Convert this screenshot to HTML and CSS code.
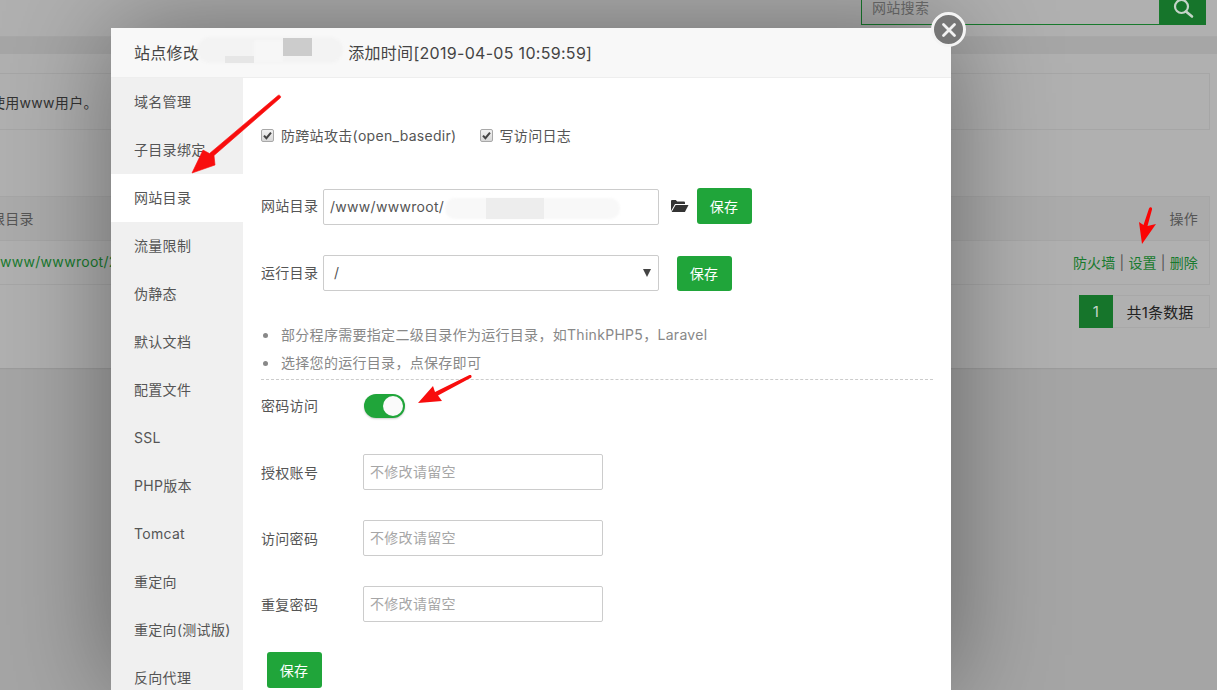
FILE: index.html
```html
<!DOCTYPE html>
<html lang="zh">
<head>
<meta charset="utf-8">
<title>站点修改</title>
<link rel="stylesheet" href="styles.css">
</head>
<body>
<div class="page">
  <header class="topbar">
    <div class="search">
      <div class="search-input">网站搜索</div>
      <div class="search-btn">
        <svg width="22" height="22" viewBox="0 0 22 22"><circle cx="9.500" cy="6.500" r="6.500" fill="none" stroke="#c4d4c8" stroke-width="2.200"/><path d="M14 11.500l6 5" stroke="#c4d4c8" stroke-width="2.600" stroke-linecap="round"/></svg>
      </div>
    </div>
  </header>
  <div class="strip"></div>
  <main class="panel">
    <div class="notice">使用www用户。</div>
    <div class="table">
      <div class="thead"><span>根目录</span><span>操作</span></div>
      <div class="trow">
        <a class="path">www/wwwroot/2</a>
        <span class="ops"><a>防火墙</a> | <a>设置</a> | <a>删除</a></span>
      </div>
    </div>
    <div class="pager"><span class="pg-cur">1</span><span class="pg-total">共1条数据</span></div>
  </main>
</div>

<section class="modal">
  <div class="modal-head">
    <span class="t1">站点修改</span><span class="t2">添加时间[2019-04-05 10:59:59]</span>
    <i class="blob b-title"></i><i class="blob b-title-c"></i><i class="blob b-title-a"></i><i class="blob b-title-b"></i>
  </div>
  <div class="modal-body">
    <nav class="side">
      <div class="side-item">域名管理</div>
      <div class="side-item">子目录绑定</div>
      <div class="side-item active">网站目录</div>
      <div class="side-item">流量限制</div>
      <div class="side-item">伪静态</div>
      <div class="side-item">默认文档</div>
      <div class="side-item">配置文件</div>
      <div class="side-item">SSL</div>
      <div class="side-item">PHP版本</div>
      <div class="side-item">Tomcat</div>
      <div class="side-item">重定向</div>
      <div class="side-item">重定向(测试版)</div>
      <div class="side-item">反向代理</div>
    </nav>
    <div class="content">
      <div class="checks">
        <label class="check"><span class="box"><svg width="9" height="9" viewBox="0 0 9 9"><path d="M1 4.600l2.400 2.600L8 1.600" fill="none" stroke="#444" stroke-width="2"/></svg></span>防跨站攻击(open_basedir)</label>
        <label class="check"><span class="box"><svg width="9" height="9" viewBox="0 0 9 9"><path d="M1 4.600l2.400 2.600L8 1.600" fill="none" stroke="#444" stroke-width="2"/></svg></span>写访问日志</label>
      </div>
      <div class="row row-dir">
        <span class="lbl">网站目录</span>
        <div class="field">/www/wwwroot/<i class="blob b-dir"></i><i class="blob b-dir-a"></i></div>
        <svg class="folder" width="19" height="14" viewBox="0 0 19 14"><path d="M1 12V2.200C1 1.500 1.500 1 2.200 1h3.600l1.400 1.600h6.600c.7 0 1.200.5 1.200 1.200V5H5L1 12z" fill="#333"/><path d="M5.600 6H18.500l-3.600 7H1.600z" fill="#333"/></svg>
        <button class="btn">保存</button>
      </div>
      <div class="row row-run">
        <span class="lbl">运行目录</span>
        <div class="field select">/<span class="caret"></span></div>
        <button class="btn btn-run">保存</button>
      </div>
      <ul class="hints">
        <li>部分程序需要指定二级目录作为运行目录，如ThinkPHP5，Laravel</li>
        <li>选择您的运行目录，点保存即可</li>
      </ul>
      <div class="row-toggle">
        <span class="lbl lbl-wide">密码访问</span>
        <span class="toggle"><span class="knob"></span></span>
      </div>
      <div class="pw-row"><span class="lbl lbl-pw">授权账号</span><input class="pw" placeholder="不修改请留空"></div>
      <div class="pw-row"><span class="lbl lbl-pw">访问密码</span><input class="pw" placeholder="不修改请留空"></div>
      <div class="pw-row"><span class="lbl lbl-pw">重复密码</span><input class="pw" placeholder="不修改请留空"></div>
      <button class="btn btn-submit">保存</button>
    </div>
  </div>
  <button class="close" aria-label="关闭">
    <svg width="16" height="16" viewBox="0 0 16 16"><path d="M2.500 2.500l11 11M13.500 2.500l-11 11" stroke="#f2f2f2" stroke-width="2.800" stroke-linecap="round"/></svg>
  </button>
</section>

<svg class="arrows" width="1217" height="690" viewBox="0 0 1217 690">
  <path d="M278 95.500C279.500 94.300 281.500 96.500 280.200 98L214 155.500 215 165 192 173 203 150 209.500 153.500z" fill="#f80d0d" stroke="#f80d0d" stroke-width=".6" stroke-linejoin="round"/>
  <path d="M1149 208.500C1150 206.300 1152.500 207 1152 209.500L1147.500 226 1156 224 1142 244 1139 222 1143.500 225z" fill="#fb0505"/>
  <path d="M469.500 375C471.500 374.300 472.500 377 470.500 378L438 395.500 442 401 418 403 433 386 435 392z" fill="#f80d0d"/>
</svg>
</body>
</html>
```
FILE: styles.css
```css
* { box-sizing: border-box; }
html, body { margin: 0; height: 690px; overflow: hidden; }
body {
  background: #a5a5a5;
  font-family: Inter, "Noto Sans CJK SC", sans-serif;
  font-size: 14px;
  letter-spacing: .3px;
  color: #555;
}
a { color: inherit; text-decoration: none; }

/* dimmed page */
.page { width: 1217px; height: 368px; display: flex; flex-direction: column; overflow: hidden; box-shadow: 0 1px 1px #9c9c9c; }
.topbar { height: 37px; flex: none; background: #b0b0b0; border-bottom: 1px solid #a8a8a8; display: flex; justify-content: flex-end; padding-right: 11px; }
.search { width: 345px; height: 25px; display: flex; }
.search-input { flex: 1; border: 1px solid #187a2d; border-top: 0; padding-left: 10px; font-size: 14px; line-height: 16px; color: #6d6d6d; }
.search-btn { width: 46px; background: #16752b; display: flex; justify-content: center; overflow: hidden; }
.strip { height: 17px; flex: none; background: #a6a6a6; }
.panel { flex: 1; background: #b0b0b0; padding: 19px 7px 0 0; overflow: hidden; }
.notice { height: 57px; border: 1px solid #a6a6a6; border-left: 0; padding: 19px 0 0 0; text-indent: -9px; line-height: 19px; color: #333; white-space: nowrap; overflow: hidden; }
.table { margin-top: 66px; height: 89px; border: 1px solid #a6a6a6; border-left: 0; }
.thead { height: 44px; border-bottom: 1px solid #a6a6a6; display: flex; justify-content: space-between; align-items: center; padding: 0 11px 2px 0; background: #ababab; color: #555; text-indent: -9px; overflow: hidden; }
.trow { height: 44px; display: flex; justify-content: space-between; align-items: center; padding: 0 11px 3px 0; color: #555; white-space: nowrap; }
.trow a { color: #187a2e; }
.ops { letter-spacing: .15px; }
.pager { margin-top: 10px; display: flex; justify-content: flex-end; height: 33px; }
.pg-cur { width: 34px; background: #16752b; color: #c5d6c9; display: flex; align-items: center; justify-content: center; font-size: 15px; }
.pg-total { width: 97px; border: 1px solid #a8a8a8; border-left: 0; padding-right: 2px; display: flex; align-items: center; justify-content: center; font-size: 15px; letter-spacing: .2px; color: #222; }

/* modal window */
.modal { position: absolute; left: 111px; top: 28px; width: 840px; height: 662px; background: #fff; box-shadow: 0 0 100px rgba(0,0,0,.4); }
.modal-head { position: relative; height: 50px; background: #f8f8f8; border-bottom: 1px solid #eee; font-size: 16px; line-height: 51px; color: #444; padding-left: 23px; white-space: nowrap; }
.t2 { margin-left: 149px; }
.modal-body { display: flex; height: 612px; overflow: hidden; }
.side { width: 132px; flex: none; background: #f0f0f0; }
.side-item { height: 48px; line-height: 47px; padding-left: 23px; color: #555; white-space: nowrap; }
.side-item.active { background: #fff; }
.content { flex: 1; padding: 47px 18px 0; }
.checks { display: flex; gap: 23px; height: 20px; }
.check { display: flex; align-items: center; color: #555; white-space: nowrap; }
.box { width: 13px; height: 13px; margin-right: 7px; border: 1px solid #a8a8a8; border-radius: 2px; background: linear-gradient(#f2f2f2, #d8d8d8); display: flex; align-items: center; justify-content: center; }
.row { display: flex; align-items: center; height: 36px; }
.row-dir { margin-top: 43px; }
.row-run { margin-top: 31px; }
.lbl { width: 62px; flex: none; color: #555; white-space: nowrap; position: relative; top: -1px; }
.field { position: relative; width: 336px; height: 36px; border: 1px solid #ccc; border-radius: 2px; padding-left: 6px; line-height: 33px; color: #555; }
.row-dir .field { margin-top: 1px; }
.select { padding-left: 10px; }
.caret { position: absolute; right: 7px; top: 13px; border-left: 4px solid transparent; border-right: 4px solid transparent; border-top: 8px solid #444; }
.folder { margin: 0 8px 0 11px; flex: none; }
.btn { width: 55px; height: 36px; border: 0; border-radius: 3px; background: #20a53a; color: #fff; font: inherit; letter-spacing: .3px; padding: 0 1px 0 0; flex: none; }
.btn-run { margin-left: 18px; height: 35px; }
.hints { list-style: none; margin: 30px 0 0; padding: 0 0 2px 20px; height: 59px; border-bottom: 1px dashed #ccc; color: #888; }
.hints li { position: relative; line-height: 28px; white-space: nowrap; }
.hints li::before { content: ""; position: absolute; left: -18px; top: 12px; width: 5px; height: 5px; border-radius: 50%; background: #888; }
.row-toggle { display: flex; align-items: center; height: 24px; margin-top: 14px; }
.lbl-wide { width: 103px; }
.toggle { display: flex; justify-content: flex-end; align-items: center; width: 41px; height: 24px; border-radius: 12px; background: #20a53a; padding-right: 2px; box-shadow: 0 1px 2px rgba(0,0,0,.2); }
.knob { width: 20px; height: 20px; border-radius: 50%; background: #fafafa; }
.pw-row { display: flex; align-items: center; height: 36px; margin-top: 30px; }
.row-toggle + .pw-row { margin-top: 36px; }
.lbl-pw { width: 102px; top: 0; }
.pw { width: 240px; height: 36px; border: 1px solid #ccc; border-radius: 2px; padding: 0 6px 2px; font: inherit; letter-spacing: .3px; color: #555; background: #fff; outline: 0; }
.pw::placeholder { color: #a6a6a6; opacity: 1; }
.btn-submit { display: block; margin: 30px 0 0 6px; }

/* over the window */
.close { position: absolute; left: 820px; top: -16px; width: 35px; height: 35px; padding: 0; border: 3px solid #f4f4f4; border-radius: 50%; background: #777; display: flex; align-items: center; justify-content: center; }
.blob { position: absolute; display: block; filter: blur(1px); }
.b-title { left: 86px; top: 9px; width: 146px; height: 26px; border-radius: 13px; background: #f3f3f3; }
.b-title-a { left: 172px; top: 10px; width: 29px; height: 18px; background: #ccc; filter: none; }
.b-title-b { left: 114px; top: 28px; width: 29px; height: 7px; background: #e6e6e6; filter: none; }
.b-title-c { left: 143px; top: 12px; width: 29px; height: 22px; background: #f7f7f7; }
.b-dir { left: 121px; top: 8px; width: 175px; height: 21px; border-radius: 10px; background: #f8f8f8; }
.b-dir-a { left: 162px; top: 8px; width: 58px; height: 21px; background: #ededed; filter: none; }
.arrows { position: absolute; left: 0; top: 0; pointer-events: none; }
```
